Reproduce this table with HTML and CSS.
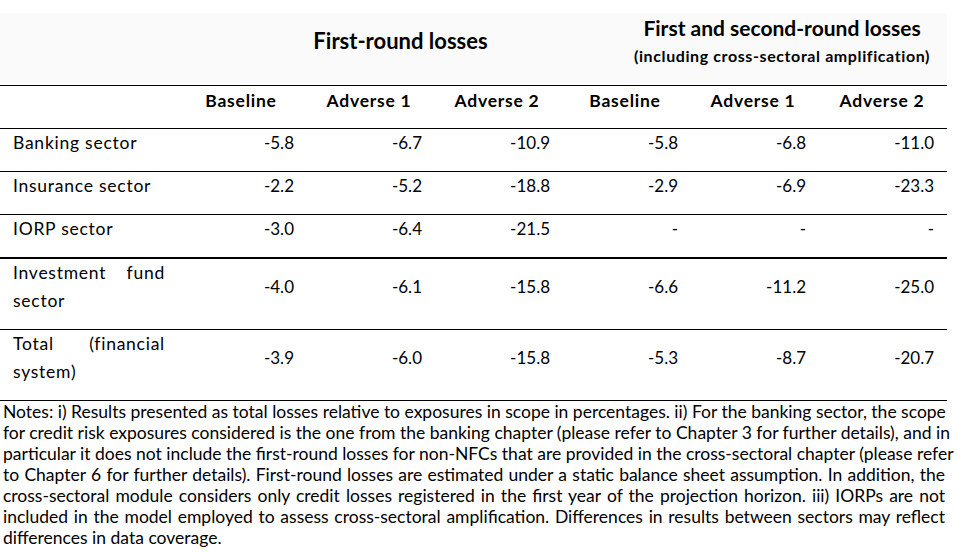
FILE: index.html
```html
<!DOCTYPE html>
<html lang="en">
<head>
<meta charset="utf-8">
<title>Losses table</title>
<link rel="stylesheet" href="styles.css">
</head>
<body>
<div class="page">
  <table class="losses">
    <colgroup>
      <col class="c-label">
      <col class="c-num"><col class="c-num"><col class="c-num">
      <col class="c-num"><col class="c-num"><col class="c-last">
    </colgroup>
    <thead>
      <tr class="grp-row">
        <th class="grp"><div class="grp-in"></div></th>
        <th class="grp" colspan="3"><div class="grp-in"><span class="g1">First-round losses</span></div></th>
        <th class="grp" colspan="3"><div class="grp-in"><span class="g2">First and second-round losses</span><span class="g2-sub">(including cross-sectoral amplification)</span></div></th>
      </tr>
      <tr class="col-row">
        <th class="lab"></th>
        <th>Baseline</th><th>Adverse 1</th><th>Adverse 2</th>
        <th>Baseline</th><th>Adverse 1</th><th>Adverse 2</th>
      </tr>
    </thead>
    <tbody>
      <tr>
        <td class="lab">Banking sector</td>
        <td>-5.8</td><td>-6.7</td><td>-10.9</td><td>-5.8</td><td>-6.8</td><td>-11.0</td>
      </tr>
      <tr>
        <td class="lab">Insurance sector</td>
        <td>-2.2</td><td>-5.2</td><td>-18.8</td><td>-2.9</td><td>-6.9</td><td>-23.3</td>
      </tr>
      <tr class="thick">
        <td class="lab">IORP sector</td>
        <td>-3.0</td><td>-6.4</td><td>-21.5</td><td>-</td><td>-</td><td>-</td>
      </tr>
      <tr>
        <td class="lab">Investment fund sector</td>
        <td>-4.0</td><td>-6.1</td><td>-15.8</td><td>-6.6</td><td>-11.2</td><td>-25.0</td>
      </tr>
      <tr>
        <td class="lab">Total (financial system)</td>
        <td>-3.9</td><td>-6.0</td><td>-15.8</td><td>-5.3</td><td>-8.7</td><td>-20.7</td>
      </tr>
    </tbody>
  </table>
  <div class="notes">
    <span class="ln">Notes: i) Results presented as total losses relative to exposures in scope in percentages. ii) For the banking sector, the scope</span>
    <span class="ln">for credit risk exposures considered is the one from the banking chapter (please refer to Chapter 3 for further details), and in</span>
    <span class="ln">particular it does not include the first-round losses for non-NFCs that are provided in the cross-sectoral chapter (please refer</span>
    <span class="ln">to Chapter 6 for further details). First-round losses are estimated under a static balance sheet assumption. In addition, the</span>
    <span class="ln">cross-sectoral module considers only credit losses registered in the first year of the projection horizon. iii) IORPs are not</span>
    <span class="ln">included in the model employed to assess cross-sectoral amplification. Differences in results between sectors may reflect</span>
    <span class="ln last">differences in data coverage.</span>
  </div>
</div>
</body>
</html>
```

FILE: styles.css
```css
html, body {
  margin: 0;
  padding: 0;
  background: #fff;
}

body {
  font-family: "Lato", "Open Sans", sans-serif;
  font-size: 17px;
  color: #000;
}

.page {
  width: 947px;
}

.losses {
  width: 947px;
  border-collapse: collapse;
  table-layout: fixed;
}

.c-label { width: 177px; }
.c-num { width: 128px; }
.c-last { width: 130px; }

/* group header row */
.grp {
  padding: 13px 0 3px;
  background: #fafafa;
  background-clip: content-box;
  border-bottom: 1px solid #000;
  font-weight: bold;
  vertical-align: top;
}

.grp-in {
  height: 69px;
  display: flex;
  flex-direction: column;
  align-items: center;
  justify-content: flex-start;
}

.g1 {
  font-size: 22px;
  line-height: 26px;
  margin-top: 15px;
  padding-left: 63px;
}

.g2 {
  font-size: 21px;
  line-height: 24px;
  margin-top: 3px;
  padding-left: 56px;
}

.g2-sub {
  font-size: 16px;
  letter-spacing: 0.6px;
  line-height: 20px;
  margin-top: 6px;
  padding-left: 56px;
}

/* column header row */
.col-row th {
  font-weight: bold;
  font-size: 17.5px;
  letter-spacing: 0.75px;
  text-align: center;
  height: 28px;
  padding: 1px 0 13px;
  line-height: 28px;
  border-bottom: 1px solid #000;
  vertical-align: middle;
}

/* body rows */
.losses td {
  text-align: right;
  padding: 0 11px 14px 0;
  line-height: 28px;
  height: 28px;
  vertical-align: middle;
  border-bottom: 1px solid #000;
}

.losses td:last-child {
  padding-right: 13px;
}

.losses td.lab {
  font-size: 17.5px;
  letter-spacing: 0.75px;
  text-align: justify;
  padding: 0 12px 14px 13px;
  vertical-align: top;
}

.losses tr.thick td {
  border-bottom: 2px solid #000;
}

/* notes */
.notes {
  font-size: 17.5px;
  padding: 0 2px 0 3px;
  line-height: 21px;
}

.ln {
  display: block;
  text-align: justify;
  text-align-last: justify;
  white-space: nowrap;
}

.ln.last {
  text-align-last: left;
}
```
